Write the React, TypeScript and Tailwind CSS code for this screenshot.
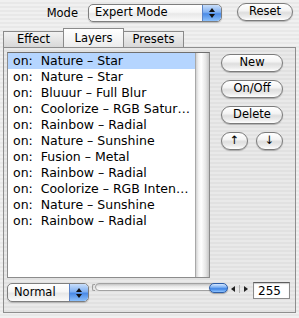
import React from "react";

const items = [
  "Nature – Star",
  "Nature – Star",
  "Bluuur – Full Blur",
  "Coolorize – RGB Satur…",
  "Rainbow – Radial",
  "Nature – Sunshine",
  "Fusion – Metal",
  "Rainbow – Radial",
  "Coolorize – RGB Inten…",
  "Nature – Sunshine",
  "Rainbow – Radial",
];

function AquaButton({ label, className }: { label: string; className: string }) {
  return (
    <div
      className={
        "flex items-center justify-center rounded-full border border-[#7b7b7b] bg-[linear-gradient(to_bottom,#ffffff_0%,#f4f4f4_40%,#dedede_55%,#ececec_80%,#ffffff_100%)] shadow-[0_1px_1px_rgba(0,0,0,0.25)] text-[11.5px] text-black leading-none " +
        className
      }
    >
      {label}
    </div>
  );
}

function Stepper() {
  return (
    <div className="flex h-full w-[19px] flex-col items-center justify-center gap-[2px] rounded-r-[4px] border-l border-[#5a83c8] bg-[linear-gradient(to_bottom,#c9defa_0%,#7fb0f2_45%,#4a8ae6_55%,#8cc0fb_100%)]">
      <svg width="6" height="4" viewBox="0 0 6 4">
        <path d="M3 0 L6 4 L0 4 Z" fill="#111" />
      </svg>
      <svg width="6" height="4" viewBox="0 0 6 4">
        <path d="M0 0 L6 0 L3 4 Z" fill="#111" />
      </svg>
    </div>
  );
}

function Popup({ label, className }: { label: string; className: string }) {
  return (
    <div
      className={
        "flex overflow-hidden rounded-[5px] border border-[#7e7e7e] bg-[linear-gradient(to_bottom,#ffffff_0%,#f6f6f6_45%,#e8e8e8_55%,#fafafa_100%)] shadow-[0_1px_1px_rgba(0,0,0,0.2)] " +
        className
      }
    >
      <div className="flex flex-1 items-center pl-[6px] text-[11.5px] text-black">{label}</div>
      <Stepper />
    </div>
  );
}

export default function App() {
  return (
    <div className="relative h-[318px] w-[299px] overflow-hidden bg-[repeating-linear-gradient(to_bottom,#f0f0f0_0px,#f0f0f0_2px,#e8e8e8_2px,#e8e8e8_4px)] font-['DejaVu_Sans',sans-serif] text-black">
      {/* top row */}
      <div className="flex h-[28px] items-start">
        <div className="mt-[6px] w-[78px] text-right text-[11.5px] leading-[14px]">Mode</div>
        <Popup label="Expert Mode" className="ml-[10px] mt-[4px] h-[18px] w-[134px]" />
        <AquaButton label="Reset" className="ml-[15px] mt-[3px] h-[18px] w-[56px]" />
      </div>

      {/* tabs */}
      <div className="flex h-[19px] items-end pl-[3px]">
        <div className="flex h-[16px] w-[61px] items-center justify-center border border-b-0 border-[#8a8a8a] bg-[linear-gradient(to_bottom,#f2f2f2,#d8d8d8)] text-[11.5px] leading-none">
          Effect
        </div>
        <div className="-ml-px flex h-[19px] w-[61px] items-center justify-center border border-b-0 border-[#8a8a8a] bg-[linear-gradient(to_bottom,#ffffff,#ececec)] pt-[1px] text-[11.5px] leading-none">
          Layers
        </div>
        <div className="-ml-px flex h-[16px] w-[61px] items-center justify-center border border-b-0 border-[#8a8a8a] bg-[linear-gradient(to_bottom,#f2f2f2,#d8d8d8)] text-[11.5px] leading-none">
          Presets
        </div>
      </div>

      {/* panel */}
      <div className="ml-[3px] flex h-[266px] w-[293px] flex-col border border-[#8e8e8e] bg-[repeating-linear-gradient(to_bottom,#e9e9e9_0px,#e9e9e9_2px,#e1e1e1_2px,#e1e1e1_4px)] pl-[3px] pt-[4px]">
        <div className="flex">
          {/* list */}
          <div className="flex h-[226px] w-[203px] border border-[#8c8c8c] border-t-[#6f6f6f] bg-white">
            <div className="flex min-w-0 flex-1 flex-col overflow-hidden">
              {items.map((t, i) => (
                <div
                  key={i}
                  className={
                    "h-[16px] overflow-hidden whitespace-pre pl-[5px] text-[12.5px] leading-[16px] " +
                    (i === 0 ? "bg-[#b5d5ff]" : "")
                  }
                >
                  {"on:  " + t}
                </div>
              ))}
            </div>
            <div className="h-full w-[14px] shrink-0 border-l border-[#a8a8a8] bg-[linear-gradient(to_right,#d2d2d2_0%,#f2f2f2_20%,#ffffff_40%,#e6e6e6_75%,#c6c6c6_100%)]" />
          </div>

          {/* buttons */}
          <div className="ml-[11px] mt-[2px] flex flex-col gap-[8px]">
            <AquaButton label="New" className="h-[18px] w-[62px]" />
            <AquaButton label="On/Off" className="h-[18px] w-[62px]" />
            <AquaButton label="Delete" className="h-[18px] w-[62px]" />
            <div className="flex gap-[8px]">
              <AquaButton label="↑" className="h-[18px] w-[27px]" />
              <AquaButton label="↓" className="h-[18px] w-[27px]" />
            </div>
          </div>
        </div>

        {/* bottom row */}
        <div className="mt-[4px] flex items-start">
          <Popup label="Normal" className="mt-[1px] h-[19px] w-[82px]" />
          <div className="relative ml-[3px] mt-[1px] h-[11px] w-[137px]">
            <div className="absolute left-0 top-[1px] h-[7px] w-[3px] rounded-l-[2px] border border-r-0 border-[#9c9c9c]" />
            <div className="absolute left-[3px] top-0 h-[8px] w-[131px] rounded-full border border-[#a2a2a2] bg-[linear-gradient(to_bottom,#c4c4c4_0%,#e8e8e8_40%,#ffffff_100%)]" />
            <div className="absolute left-[117px] top-0 h-[10px] w-[19px] rounded-full border border-[#2e5ea8] bg-[linear-gradient(to_bottom,#d6e8ff_0%,#7fb2f4_40%,#3f84e4_60%,#8fc4ff_100%)] shadow-[0_1px_1px_rgba(0,0,0,0.3)]" />
          </div>
          <div className="ml-[2px] mt-[3px] flex h-[8px] items-center gap-[3px]">
            <svg width="5" height="6" viewBox="0 0 5 6">
              <path d="M0 3 L4 0 L4 6 Z" fill="#222" />
            </svg>
            <div className="h-[8px] w-px bg-[#b0b0b0]" />
            <svg width="5" height="6" viewBox="0 0 5 6">
              <path d="M1 0 L5 3 L1 6 Z" fill="#222" />
            </svg>
          </div>
          <div className="ml-[5px] flex h-[17px] w-[37px] items-center border border-[#8a8a8a] border-t-[#5e5e5e] bg-white pl-[4px] text-[12px] leading-none shadow-[inset_0_1px_1px_rgba(0,0,0,0.2)]">
            255
          </div>
        </div>
      </div>
    </div>
  );
}
